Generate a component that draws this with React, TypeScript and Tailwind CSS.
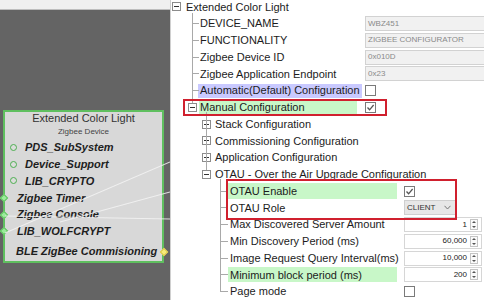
const font = "font-['Liberation_Sans',Arial,sans-serif]";

function Expander({ open }: { open: boolean }) {
  return (
    <svg width="9" height="9" viewBox="0 0 9 9" className="shrink-0">
      <rect x="0.5" y="0.5" width="8" height="8" fill="#fff" stroke="#8c8c8c" />
      <line x1="2" y1="4.5" x2="7" y2="4.5" stroke="#333" />
      {!open && <line x1="4.5" y1="2" x2="4.5" y2="7" stroke="#333" />}
    </svg>
  );
}

function Check({ checked }: { checked?: boolean }) {
  return (
    <svg width="11" height="11" viewBox="0 0 11 11">
      <rect x="0.5" y="0.5" width="10" height="10" fill="#fff" stroke="#7a7a7a" />
      {checked && <path d="M2.5 5.5 L4.6 7.8 L8.6 3" fill="none" stroke="#555" strokeWidth="1.3" />}
    </svg>
  );
}

function ValueBox({ text }: { text: string }) {
  return (
    <div className="flex h-[15px] w-[125px] items-center border border-[#d2d2d2] bg-[#f1f1f1] pl-[2px] text-[8px] text-[#8a8a8a]">
      {text}
    </div>
  );
}

function Spinner({ value }: { value: string }) {
  return (
    <div className="flex h-[15px] w-[78px] items-center border border-[#d6d6d6] bg-white">
      <span className="flex-1 pr-[3px] text-right text-[8px] text-[#222]">{value}</span>
      <svg width="8" height="11" viewBox="0 0 8 11" className="mr-[3px]">
        <rect x="0.5" y="0.5" width="7" height="10" fill="#fafafa" stroke="#c4c4c4" />
        <path d="M2 4 L4 2 L6 4 Z" fill="#555" />
        <path d="M2 7 L4 9 L6 7 Z" fill="#555" />
      </svg>
    </div>
  );
}

function CardRow({
  label,
  kind,
}: {
  label: string;
  kind: "circle" | "diamond" | "plain";
}) {
  return (
    <div
      className={`relative flex h-[16.8px] items-center ${
        kind === "circle" ? "pl-[5px]" : kind === "diamond" ? "pl-[12px]" : "mt-[3.5px] pl-[11px]"
      }`}
    >
      {kind === "circle" && (
        <span className="mr-[8px] h-[7px] w-[7px] rounded-full border-[1.5px] border-[#4caf50] bg-[#dcdcdc]" />
      )}
      {kind === "diamond" && (
        <span className="absolute left-[-4px] top-[5.5px] h-[6px] w-[6px] rotate-45 border border-[#5cc25c] bg-[#9beb9b]" />
      )}
      {kind === "plain" && (
        <span className="absolute right-[-5px] top-[5.5px] h-[6px] w-[6px] rotate-45 border border-[#d8c64a] bg-[#f6ec7a]" />
      )}
      <span className="whitespace-nowrap text-[11px] font-bold italic text-[#1e1e1e]">{label}</span>
    </div>
  );
}

function TreeLines() {
  const y = (i: number) => 6.975 + 16.75 * i;
  const l1 = [1, 2, 3, 4, 5];
  const l3 = [11, 12, 13, 14, 15, 16, 17];
  return (
    <svg className="pointer-events-none absolute inset-0" width="313" height="300">
      <g stroke="#a9a9a9" strokeWidth="1" shapeRendering="crispEdges">
        <line x1="21.5" y1="13" x2="21.5" y2="103" />
        {l1.map((i) => (
          <line key={i} x1="21.5" y1={y(i)} x2="28" y2={y(i)} />
        ))}
        <line x1="35.5" y1="112" x2="35.5" y2="170" />
        <line x1="49.5" y1="179" x2="49.5" y2={y(17)} />
        {l3.map((i) => (
          <line key={i} x1="49.5" y1={y(i)} x2="57" y2={y(i)} />
        ))}
      </g>
    </svg>
  );
}

export default function App() {
  return (
    <div className={`flex h-[300px] w-[484px] overflow-hidden bg-white ${font}`}>
      {/* left: graph canvas */}
      <div className="relative flex w-[170px] shrink-0 flex-col bg-[#646464]">
        <div className="h-[10px] shrink-0 border-b border-[#bdbdbd] bg-[#efefef]" />
        <div className="ml-[3px] mt-[100px] flex h-[153px] w-[161px] flex-col border-2 border-[#5fbf5f] bg-[#d8d8d8]">
          <div className="h-[13px] text-center text-[11px] leading-[13px] text-[#333]">Extended Color Light</div>
          <div className="h-[14px] text-center text-[8px] leading-[14px] text-[#444]">Zigbee Device</div>
          <CardRow label="PDS_SubSystem" kind="circle" />
          <CardRow label="Device_Support" kind="circle" />
          <CardRow label="LIB_CRYPTO" kind="circle" />
          <CardRow label="Zigbee Timer" kind="diamond" />
          <CardRow label="Zigbee Console" kind="diamond" />
          <CardRow label="LIB_WOLFCRYPT" kind="diamond" />
          <CardRow label="BLE ZigBee Commisioning" kind="plain" />
        </div>
        <svg className="pointer-events-none absolute inset-0" width="170" height="300">
          <g stroke="#f4f4f4" strokeWidth="1.1" opacity="0.85">
            <line x1="5" y1="233" x2="170" y2="162" />
            <line x1="5" y1="216" x2="170" y2="219" />
            <line x1="60" y1="222" x2="170" y2="192" />
          </g>
        </svg>
      </div>

      {/* right: configuration tree */}
      <div className="relative flex-1 overflow-hidden border-l border-[#d0d0d0] bg-white text-[11px] text-[#1c1c1c]">
        <div className="mt-[-1.4px] flex flex-col">
          <div className="flex h-[16.75px] items-center">
            <div className="flex w-[15px] shrink-0 pl-[1px]">
              <Expander open />
            </div>
            <span>Extended Color Light</span>
          </div>
          {[
            ["DEVICE_NAME", "WBZ451"],
            ["FUNCTIONALITY", "ZIGBEE CONFIGURATOR"],
            ["Zigbee Device ID", "0x010D"],
            ["Zigbee Application Endpoint", "0x23"],
          ].map(([k, v]) => (
            <div key={k} className="flex h-[16.75px] items-center">
              <div className="w-[28px] shrink-0" />
              <span className="w-[158px] shrink-0 whitespace-nowrap pl-[1px]">{k}</span>
              <div className="ml-[8px]">
                <ValueBox text={v} />
              </div>
            </div>
          ))}
          <div className="flex h-[16.75px] items-center">
            <div className="w-[27px] shrink-0" />
            <span className="flex h-[14px] w-[164px] shrink-0 items-center whitespace-nowrap bg-[#c9c9ff] pl-[2px]">
              Automatic(Default) Configuration
            </span>
            <div className="ml-[3px] flex">
              <Check />
            </div>
          </div>
          <div className="flex h-[16.75px] items-center">
            <div className="flex w-[28px] shrink-0 pl-[17px]">
              <Expander open />
            </div>
            <span className="flex h-[14px] w-[158px] shrink-0 items-center whitespace-nowrap bg-[#c8f7c8] pl-[1px]">
              Manual Configuration
            </span>
            <div className="ml-[8px] flex">
              <Check checked />
            </div>
          </div>
          {[
            ["Stack Configuration", false],
            ["Commissioning Configuration", false],
            ["Application Configuration", false],
            ["OTAU - Over the Air Upgrade Configuration", true],
          ].map(([k, open]) => (
            <div key={k as string} className="flex h-[16.75px] items-center">
              <div className="flex w-[43px] shrink-0 pl-[31px]">
                <Expander open={open as boolean} />
              </div>
              <span className="whitespace-nowrap pl-[1px]">{k as string}</span>
            </div>
          ))}
          <div className="flex h-[16.75px] items-center">
            <div className="w-[57px] shrink-0" />
            <span className="flex h-[16px] w-[169px] shrink-0 items-center bg-[#c8f7c8] pl-[2px]">OTAU Enable</span>
            <div className="ml-[7px] flex">
              <Check checked />
            </div>
          </div>
          <div className="flex h-[16.75px] items-center">
            <div className="w-[57px] shrink-0" />
            <span className="w-[169px] shrink-0 pl-[2px]">OTAU Role</span>
            <div className="ml-[7px] flex h-[15px] w-[52px] items-center justify-between border border-[#cfcfcf] bg-[#e7e7e7] pl-[2px] pr-[4px] text-[8px] text-[#333]">
              <span>CLIENT</span>
              <svg width="7" height="5" viewBox="0 0 7 5">
                <path d="M0.5 0.8 L3.5 4 L6.5 0.8" fill="none" stroke="#777" />
              </svg>
            </div>
          </div>
          {[
            ["Max Discovered Server Amount", "1", false],
            ["Min Discovery Period (ms)", "60,000", false],
            ["Image Request Query Interval(ms)", "10,000", false],
            ["Minimum block period (ms)", "200", true],
          ].map(([k, v, hl]) => (
            <div key={k as string} className="flex h-[16.75px] items-center">
              <div className="w-[57px] shrink-0" />
              <span
                className={`flex h-[15px] w-[169px] shrink-0 items-center whitespace-nowrap pl-[2px] ${
                  hl ? "bg-[#c8f7c8]" : ""
                }`}
              >
                {k as string}
              </span>
              <div className="ml-[7px]">
                <Spinner value={v as string} />
              </div>
            </div>
          ))}
          <div className="flex h-[16.75px] items-center">
            <div className="w-[57px] shrink-0" />
            <span className="w-[169px] shrink-0 pl-[2px]">Page mode</span>
            <div className="ml-[7px] flex">
              <Check />
            </div>
          </div>
        </div>

        <TreeLines />

        <div className="pointer-events-none absolute left-[12px] top-[99px] h-[17px] w-[204px] border-2 border-[#d0202e]" />
        <div className="pointer-events-none absolute left-[55px] top-[179px] h-[41px] w-[231px] border-2 border-[#d0202e]" />
      </div>
    </div>
  );
}
